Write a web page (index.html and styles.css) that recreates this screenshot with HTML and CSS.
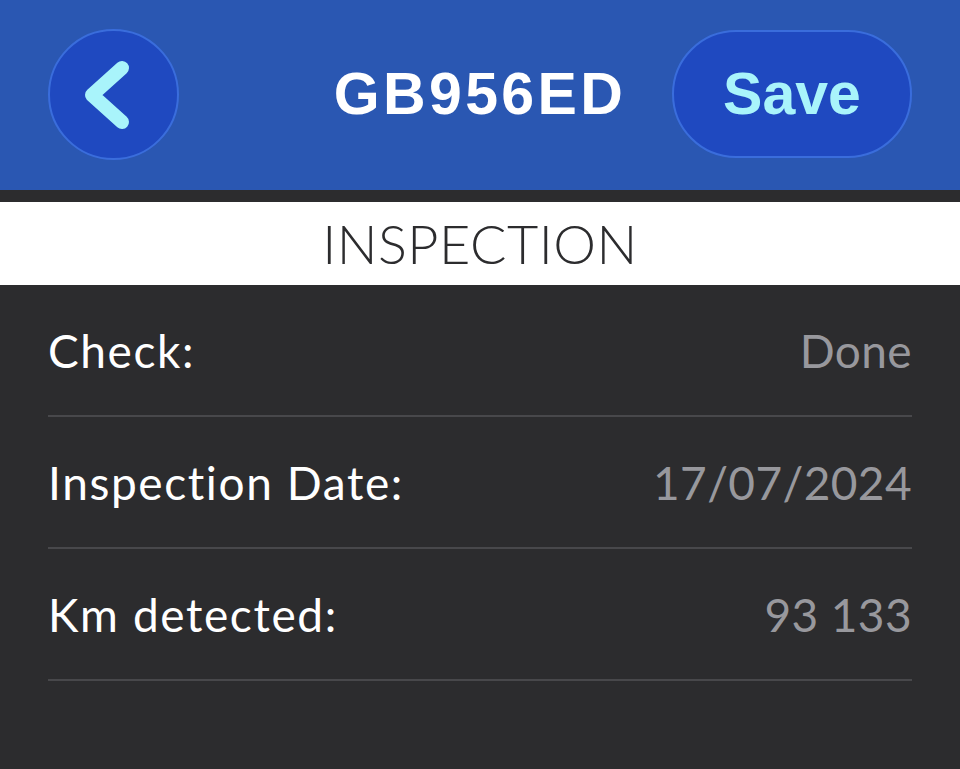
FILE: index.html
```html
<!DOCTYPE html>
<html lang="en">
<head>
    <meta charset="UTF-8">
    <meta name="viewport" content="width=device-width, initial-scale=1.0">
    <title>GB956ED</title>
    <link rel="stylesheet" href="styles.css">
</head>
<body>
    <header class="topbar">
        <button class="back-btn" aria-label="Back">
            <svg width="131" height="131" viewBox="0 0 131 131">
                <polyline points="74,39 44,66 74,93" fill="none" stroke="#a9f4fb" stroke-width="14" stroke-linecap="round" stroke-linejoin="round"/>
            </svg>
        </button>
        <h1 class="plate">GB956ED</h1>
        <button class="save-btn">Save</button>
    </header>

    <div class="section-title">INSPECTION</div>

    <ul class="details">
        <li class="row">
            <span class="label">Check:</span>
            <span class="value">Done</span>
        </li>
        <li class="row">
            <span class="label">Inspection Date:</span>
            <span class="value">17/07/2024</span>
        </li>
        <li class="row">
            <span class="label">Km detected:</span>
            <span class="value">93 133</span>
        </li>
    </ul>
</body>
</html>
```

FILE: styles.css
```css
body {
    margin: 0;
    background-color: #2c2c2e;
    font-family: Lato, "Liberation Sans", sans-serif;
    color: #ffffff;
}

.topbar {
    height: 190px;
    display: grid;
    grid-template-columns: 1fr auto 1fr;
    align-items: center;
    padding: 0 48px 2px;
    box-sizing: border-box;
    background-color: #2a57b2;
}

.back-btn {
    justify-self: start;
    width: 131px;
    height: 131px;
    padding: 0;
    border-radius: 50%;
    border: 2px solid #3a6ddc;
    background-color: #1f49c0;
    display: flex;
    align-items: center;
    justify-content: center;
    cursor: pointer;
}

.back-btn svg {
    display: block;
    margin: -2px;
}

.plate {
    margin: 0;
    font-family: "Liberation Sans", Arial, sans-serif;
    font-weight: 700;
    font-size: 59px;
    letter-spacing: 3.4px;
    color: #ffffff;
}

.save-btn {
    justify-self: end;
    width: 240px;
    height: 128px;
    border-radius: 64px;
    border: 2px solid #3a6ddc;
    background-color: #1f49c0;
    font-family: "Liberation Sans", Arial, sans-serif;
    font-weight: 700;
    font-size: 59px;
    color: #a9f4fb;
    cursor: pointer;
}

.section-title {
    margin-top: 12px;
    height: 83px;
    display: flex;
    align-items: center;
    justify-content: center;
    background-color: #ffffff;
    color: #2c2c2e;
    font-size: 54px;
    font-weight: 300;
    letter-spacing: 0.5px;
}

.details {
    list-style: none;
    margin: 0;
    padding: 0 48px;
}

.row {
    height: 130px;
    display: flex;
    align-items: center;
    justify-content: space-between;
    border-bottom: 2px solid #48484b;
    font-size: 46px;
}

.label {
    color: #ffffff;
    letter-spacing: 1.6px;
}

.value {
    color: #98989d;
    letter-spacing: 0.4px;
}
```
